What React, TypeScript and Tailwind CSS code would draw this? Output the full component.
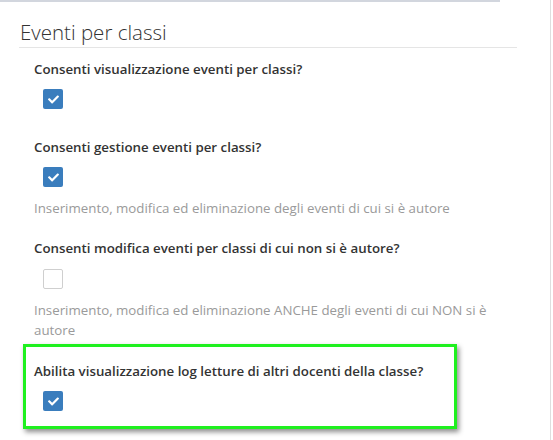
import { FaCheck } from 'react-icons/fa';

function Checkbox({ checked }: { checked: boolean }) {
  if (checked) {
    return (
      <div className="w-5 h-5 rounded-[2px] bg-[#3a7dbd] flex items-center justify-center text-white">
        <FaCheck size={11} />
      </div>
    );
  }
  return <div className="w-5 h-5 rounded-[2px] border border-[#cfcfcf] bg-white" />;
}

type Option = {
  label: string;
  checked: boolean;
  help?: string;
};

const options: Option[] = [
  { label: 'Consenti visualizzazione eventi per classi?', checked: true },
  {
    label: 'Consenti gestione eventi per classi?',
    checked: true,
    help: 'Inserimento, modifica ed eliminazione degli eventi di cui si è autore',
  },
  {
    label: 'Consenti modifica eventi per classi di cui non si è autore?',
    checked: false,
    help: 'Inserimento, modifica ed eliminazione ANCHE degli eventi di cui NON si è autore',
  },
];

export default function App() {
  return (
    <div className="w-[553px] h-[440px] bg-white flex overflow-hidden font-['Open_Sans',sans-serif]">
      <div className="w-[550px] flex flex-col">
        <div className="h-[2px] w-[500px] bg-[#d2d6de]" />

        <div className="ml-[19px] w-[498px] mt-[19px] pb-[4px] border-b border-[#e5e5e5]">
          <h3 className="pl-px text-[20.5px] leading-[22px] font-light text-[#333]">Eventi per classi</h3>
        </div>

        <div className="pl-[23px] flex flex-col">
          {/* visualizzazione */}
          <div className="w-[490px] px-[11px] mt-[11px]">
            <div className="text-[13.3px] leading-5 font-semibold text-[#333]">{options[0].label}</div>
            <div className="pl-[9px] mt-[10px]">
              <Checkbox checked={options[0].checked} />
            </div>
          </div>

          {/* gestione */}
          <div className="w-[490px] px-[11px] mt-[28px]">
            <div className="text-[13.3px] leading-5 font-semibold text-[#333]">{options[1].label}</div>
            <div className="pl-[9px] mt-[10px]">
              <Checkbox checked={options[1].checked} />
            </div>
            <p className="mt-[11px] text-[13.3px] leading-5 text-[#9a9a9a]">{options[1].help}</p>
          </div>

          {/* modifica */}
          <div className="w-[490px] px-[11px] mt-[20px]">
            <div className="text-[13.3px] leading-5 font-semibold text-[#333]">{options[2].label}</div>
            <div className="pl-[9px] mt-[11px]">
              <Checkbox checked={options[2].checked} />
            </div>
            <p className="mt-[11px] text-[13.3px] leading-5 text-[#9a9a9a]">{options[2].help}</p>
          </div>

          {/* highlighted option */}
          <div className="w-[434px] mt-[4px] border-[3px] border-[#1ff01f] pl-[8px] pt-[14px] pb-[15px] shadow-[2px_3px_5px_rgba(0,0,0,0.45)]">
            <div className="text-[13.3px] leading-5 font-semibold text-[#333]">
              Abilita visualizzazione log letture di altri docenti della classe?
            </div>
            <div className="pl-[9px] mt-[10px]">
              <Checkbox checked />
            </div>
          </div>
        </div>
      </div>
      <div className="w-px bg-[#dedede]" />
    </div>
  );
}
